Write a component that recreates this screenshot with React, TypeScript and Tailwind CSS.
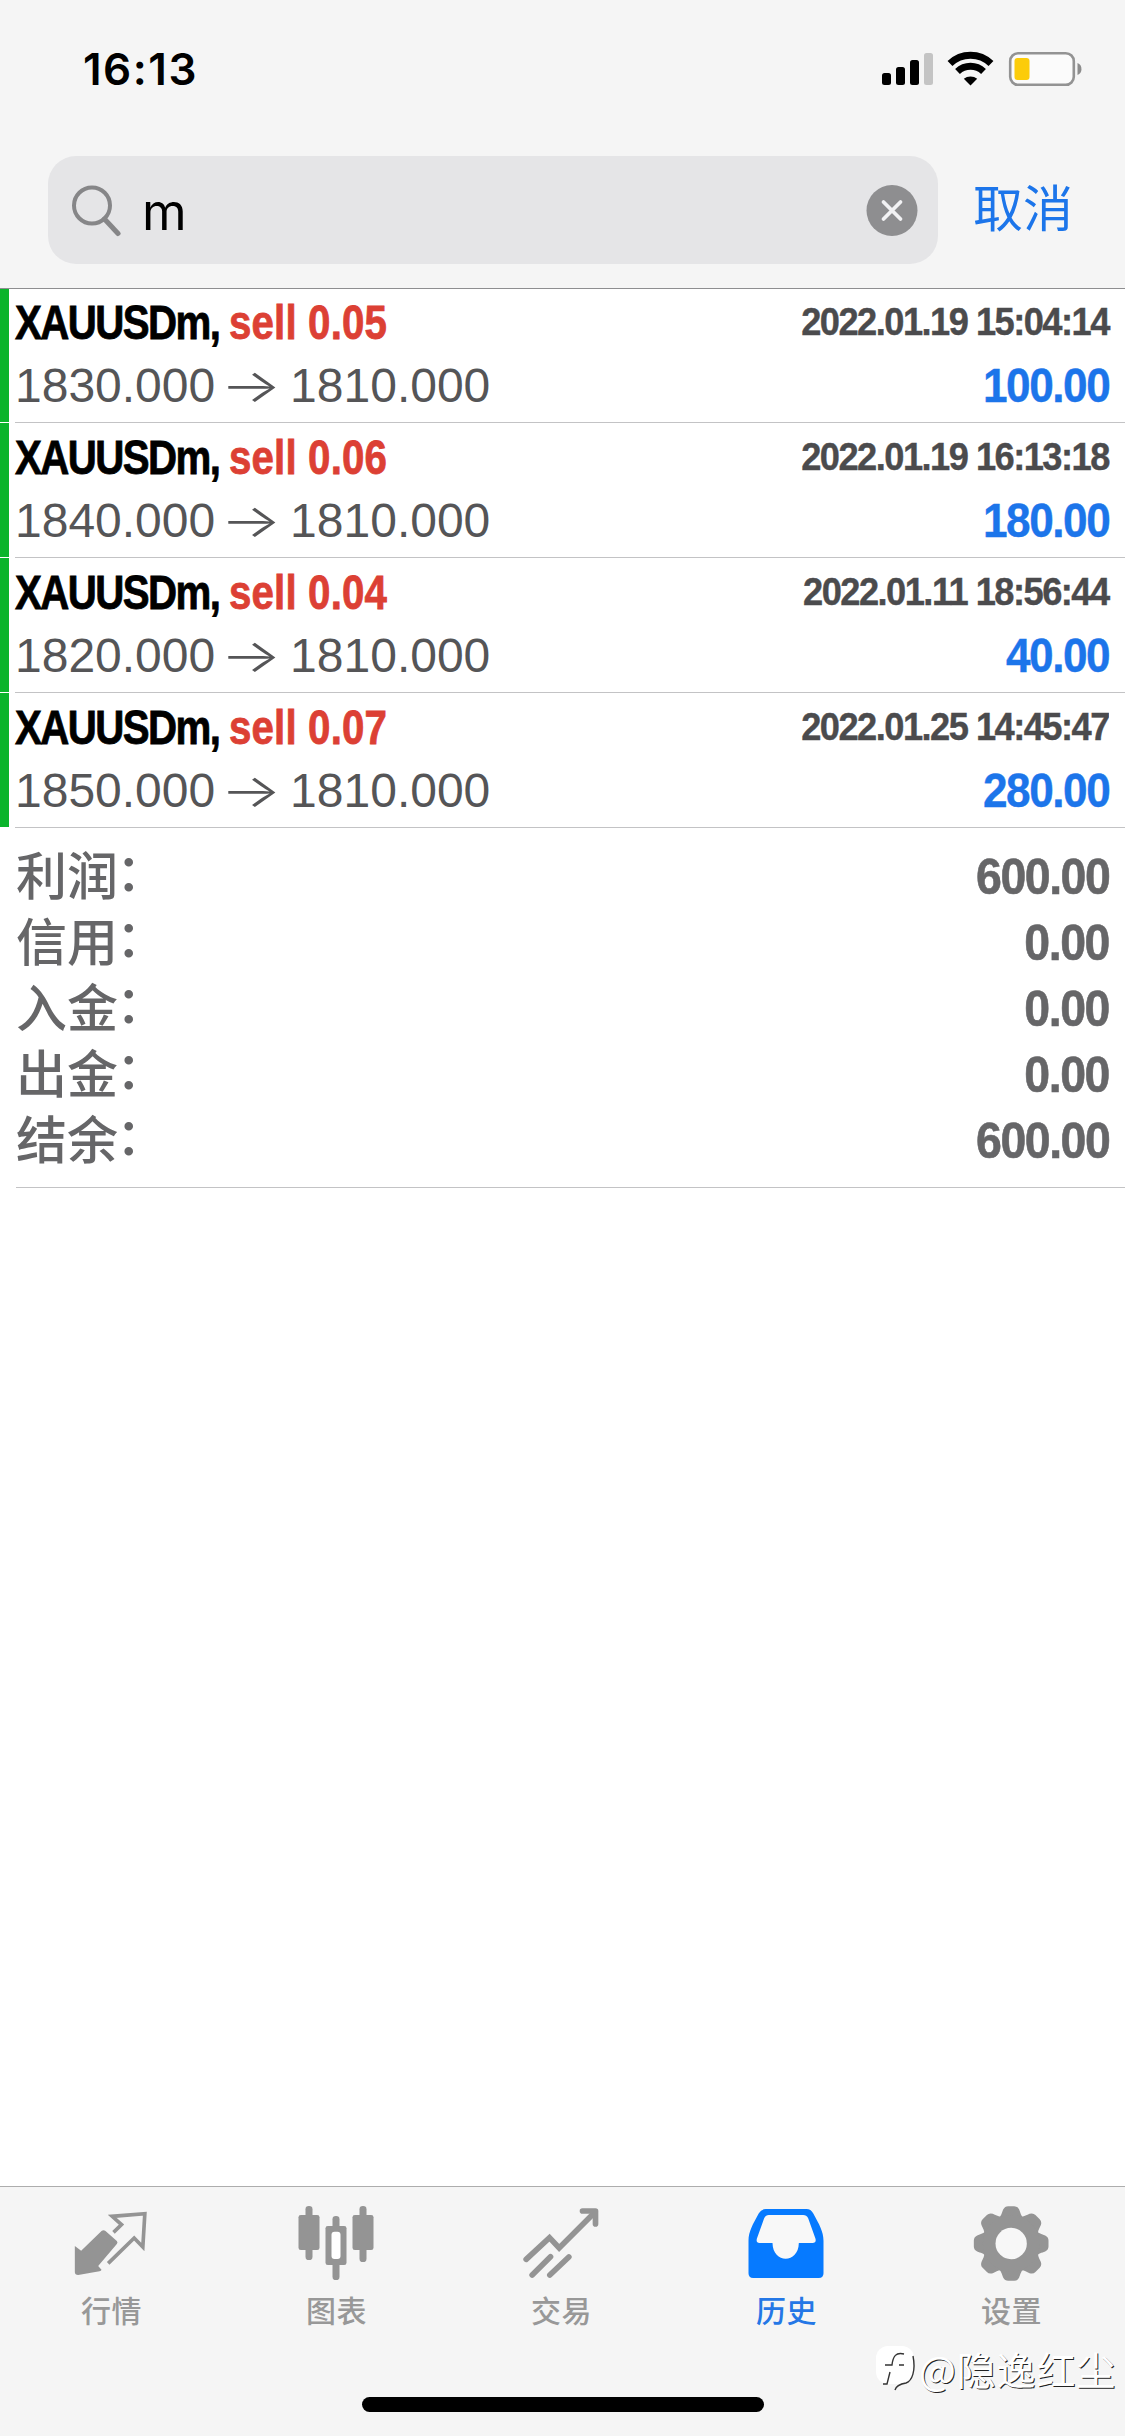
import type { ReactNode } from "react";

interface Deal {
    symbol: string;
    side: string;
    open: string;
    close: string;
    time: string;
    profit: string;
}

const deals: Deal[] = [
    { symbol: "XAUUSDm,", side: "sell 0.05", open: "1830.000", close: "1810.000", time: "2022.01.19 15:04:14", profit: "100.00" },
    { symbol: "XAUUSDm,", side: "sell 0.06", open: "1840.000", close: "1810.000", time: "2022.01.19 16:13:18", profit: "180.00" },
    { symbol: "XAUUSDm,", side: "sell 0.04", open: "1820.000", close: "1810.000", time: "2022.01.11 18:56:44", profit: "40.00" },
    { symbol: "XAUUSDm,", side: "sell 0.07", open: "1850.000", close: "1810.000", time: "2022.01.25 14:45:47", profit: "280.00" },
];

const totals = [
    { label: "利润", value: "600.00" },
    { label: "信用", value: "0.00" },
    { label: "入金", value: "0.00" },
    { label: "出金", value: "0.00" },
    { label: "结余", value: "600.00" },
];

const StatusBar = () => (
    <div className="flex h-[138px] items-center justify-between pr-[43px] pl-[83px]">
        <span className="font-['Inter',sans-serif] text-[44px] leading-none font-semibold tracking-[1.5px] text-black">
            16:13
        </span>
        <svg width="202" height="36" viewBox="0 0 202 36">
            <rect x="2" y="22" width="9" height="12" rx="2.5" />
            <rect x="16" y="16" width="9" height="18" rx="2.5" />
            <rect x="30" y="9" width="9" height="25" rx="2.5" />
            <rect x="44" y="2" width="9" height="32" rx="2.5" fill="#c4c4c4" />
            <g fill="none" stroke="#000" strokeWidth="7">
                <path d="M70 12.5a29.5 29.5 0 0 1 41 0" />
                <path d="M77.5 20.5a19 19 0 0 1 26 0" />
            </g>
            <path d="M83.8 27.8a10.5 10.5 0 0 1 13.4 0L90.5 34.5z" />
            <rect x="130.2" y="2.2" width="63.6" height="31.6" rx="8" fill="#fbfbfb" stroke="#939393" strokeWidth="2.6" />
            <rect x="134.5" y="7" width="15" height="22" rx="3" fill="#fccc0a" />
            <path d="M197.5 12c5.3 1.5 5.3 10.5 0 12z" fill="#8c8c8c" />
        </svg>
    </div>
);

const SearchBar = () => (
    <div className="flex pt-[18px] pl-[48px]">
        <div className="flex h-[108px] w-[890px] items-center rounded-[28px] bg-[#e5e5e7] pr-5 pl-[22px]">
            <svg width="54" height="54" viewBox="0 0 54 54" fill="none" stroke="#868688">
                <circle cx="22" cy="22.5" r="18" strokeWidth="4" />
                <path d="M34.5 36 48 50.5" strokeWidth="5" strokeLinecap="round" />
            </svg>
            <span className="ml-[18px] grow pt-[2px] font-['Inter',sans-serif] text-[51px] leading-none text-black">
                m
            </span>
            <svg width="52" height="52" viewBox="0 0 52 52">
                <circle cx="26" cy="26.5" r="25.5" fill="#8e8e90" />
                <path d="m17.5 18 17 17m0-17-17 17" stroke="#f2f2f4" strokeWidth="3.8" strokeLinecap="round" />
            </svg>
        </div>
        <button className="ml-[35px] h-[98px] font-['Noto_Sans_CJK_SC',sans-serif] text-[50px] leading-[98px] font-normal text-[#1c75ea]">
            取消
        </button>
    </div>
);

// Condensed bold figures: Liberation Sans squeezed horizontally towards its outer edge
const DealRow = ({ deal }: { deal: Deal }) => (
    <div className="flex h-[135px]">
        <div className="h-[134px] w-[9px] bg-[#0ab42b]" />
        <div className="ml-1.5 grow border-b border-[#c3c3c5] pr-4 font-['Liberation_Sans',sans-serif]">
            <div className="flex h-[69px] items-center justify-between font-bold whitespace-pre">
                <span className="origin-left scale-x-[0.83] text-[48.5px] tracking-[-1.9px] text-black [-webkit-text-stroke:0.8px_currentColor]">
                    {deal.symbol} <span className="tracking-[0.2px] text-[#dc4034]">{deal.side}</span>
                </span>
                <span className="origin-right scale-x-[0.93] text-[39px] tracking-[-1.65px] text-[#4b4b4d] [-webkit-text-stroke:0.4px_currentColor]">
                    {deal.time}
                </span>
            </div>
            <div className="flex h-[58px] items-center justify-between leading-[56px]">
                <span className="flex items-center text-[48px] text-[#555557]">
                    {deal.open}
                    <span className="-mt-[3px] mr-[17px] ml-[14px] scale-x-[1.4] font-['Inter',sans-serif] text-[46px] font-light">→</span>
                    {deal.close}
                </span>
                <span className="origin-right scale-x-[0.92] text-[48px] font-bold tracking-[-1.6px] text-[#1c75ea] [-webkit-text-stroke:0.4px_currentColor]">
                    {deal.profit}
                </span>
            </div>
        </div>
    </div>
);

const Summary = () => (
    <div className="ml-4 h-[360px] border-b border-[#c3c3c5] pt-[15px] pr-4">
        {totals.map((row) => (
            <div key={row.label} className="flex h-[66px] items-center justify-between text-[#666668]">
                <span className="-mt-1.5 font-['Noto_Sans_CJK_SC',sans-serif] text-[51px] leading-[60px] font-medium">
                    {row.label}
                    <span className="inline-block -translate-x-0.5 -translate-y-1">：</span>
                </span>
                <span className="mt-0.5 origin-right scale-x-[0.93] font-['Liberation_Sans',sans-serif] text-[50px] leading-[60px] font-bold tracking-[-1.6px] [-webkit-text-stroke:0.6px_currentColor]">
                    {row.value}
                </span>
            </div>
        ))}
    </div>
);

const QuotesIcon = () => (
    <svg width="80" height="80" viewBox="217.5 102 240 240" fill="#949494">
        <path d="M226 228 245 242 306 183Q312 178 318 183L352 213Q356 217 352 222L296 288 306 299Q305 303 300 304L236 315Q226 315 226 306Z" />
        <path d="M342 187 366 164 338 139 436 131 430 231 404 204 326 280" fill="none" stroke="#949494" strokeWidth="11" />
    </svg>
);

const ChartIcon = () => (
    <svg width="80" height="80" viewBox="892.5 102 240 240" fill="#949494">
        <rect x="918" y="108" width="21" height="162" rx="10" />
        <rect x="897" y="135" width="63" height="105" rx="7" />
        <rect x="999" y="138" width="21" height="192" rx="10" />
        <rect x="978" y="168" width="63" height="117" rx="7" />
        <rect x="996" y="185" width="27" height="82" rx="9" fill="#fff" />
        <rect x="1080" y="108" width="21" height="168" rx="10" />
        <rect x="1059" y="135" width="63" height="105" rx="7" />
    </svg>
);

const TradeIcon = () => (
    <svg width="80" height="80" viewBox="367.5 102 240 240" fill="none" stroke="#949494" strokeWidth="17">
        <path d="M380 268 450 203 479 234 586 127" strokeLinecap="round" />
        <path d="M549 123H588V162" strokeLinecap="round" strokeLinejoin="round" />
        <path d="M398 315 453 260" strokeLinecap="round" />
        <path d="M451 315 508 261" strokeLinecap="round" />
    </svg>
);

const HistoryIcon = () => (
    <svg width="80" height="80" viewBox="67.5 102 240 240">
        <path d="M124 117H246Q259 117 266 130C284 163 297 185 297 212V310Q297 324 283 324H86Q72 324 72 310V212C72 185 85 163 103 130Q110 117 124 117Z" fill="#067aff" />
        <path d="M133 135H236Q246 135 251 145L273 206Q276 219 264 219H223C222 282 145 282 144 219H105Q94 219 97 206L119 145Q124 135 133 135Z" fill="#f8f8f8" />
    </svg>
);

const teeth = [0, 45, 90, 135, 180, 225, 270, 315];

const SettingsIcon = () => (
    <svg width="80" height="80" viewBox="-117.5 -118.5 240 240" fill="#949494">
        {teeth.map((angle) => (
            <path
                key={angle}
                transform={`rotate(${angle})`}
                d="M-38-77C-30-81-28-92-24-102Q-19-112-9-112H9Q19-112 24-102C28-92 30-81 38-77L20 0H-20Z"
            />
        ))}
        <circle r="85" />
        <circle r="47" fill="#f7f7f7" />
    </svg>
);

interface TabProps {
    label: string;
    icon: ReactNode;
    active?: boolean;
}

const Tab = ({ label, icon, active }: TabProps) => (
    <div
        className={`flex w-[225px] flex-col items-center pt-[17px] ${active ? "text-[#2477e6]" : "text-[#989898]"}`}
    >
        {icon}
        <span className="mt-[5px] font-['Noto_Sans_CJK_SC',sans-serif] text-[30px] leading-[40px] font-medium tracking-[0.5px]">
            {label}
        </span>
    </div>
);

const Watermark = () => (
    <div className="absolute right-[9px] bottom-[43px] flex items-center">
        <svg width="43" height="50" viewBox="0 0 43 50" fill="none">
            <rect x="0" y="3" width="38" height="38" rx="12" fill="#fff" />
            <path d="M37 13C40 28 36 38 30 40 24 41 20 43 19 47" stroke="#333" strokeWidth="1.4" />
            <path d="M28 11C20 9 17 13 16 22H9M23 22h5M14 29 11 41H7" stroke="#333" strokeWidth="1.4" />
        </svg>
        <span className="font-['Noto_Sans_CJK_SC',sans-serif] text-[39px] leading-[50px] tracking-[0.8px] text-white [text-shadow:1px_1px_0.5px_#222]">
            @隐逸红尘
        </span>
    </div>
);

const App = () => (
    <div className="relative flex h-[2436px] w-[1125px] flex-col overflow-hidden bg-white">
        <header className="z-10 h-[289px] shrink-0 border-b border-[#8e8e90] bg-[#f5f5f5]">
            <StatusBar />
            <SearchBar />
        </header>
        <main className="-mt-px grow">
            {deals.map((deal) => (
                <DealRow key={deal.time} deal={deal} />
            ))}
            <Summary />
        </main>
        <footer className="flex h-[250px] shrink-0 flex-col border-t border-[#adadad] bg-[#f5f5f5]">
            <nav className="-ml-px flex h-[210px]">
                <Tab label="行情" icon={<QuotesIcon />} />
                <Tab label="图表" icon={<ChartIcon />} />
                <Tab label="交易" icon={<TradeIcon />} />
                <Tab label="历史" icon={<HistoryIcon />} active />
                <Tab label="设置" icon={<SettingsIcon />} />
            </nav>
            <div className="mx-auto h-[15px] w-[402px] rounded-full bg-black" />
        </footer>
        <Watermark />
    </div>
);

export default App;
